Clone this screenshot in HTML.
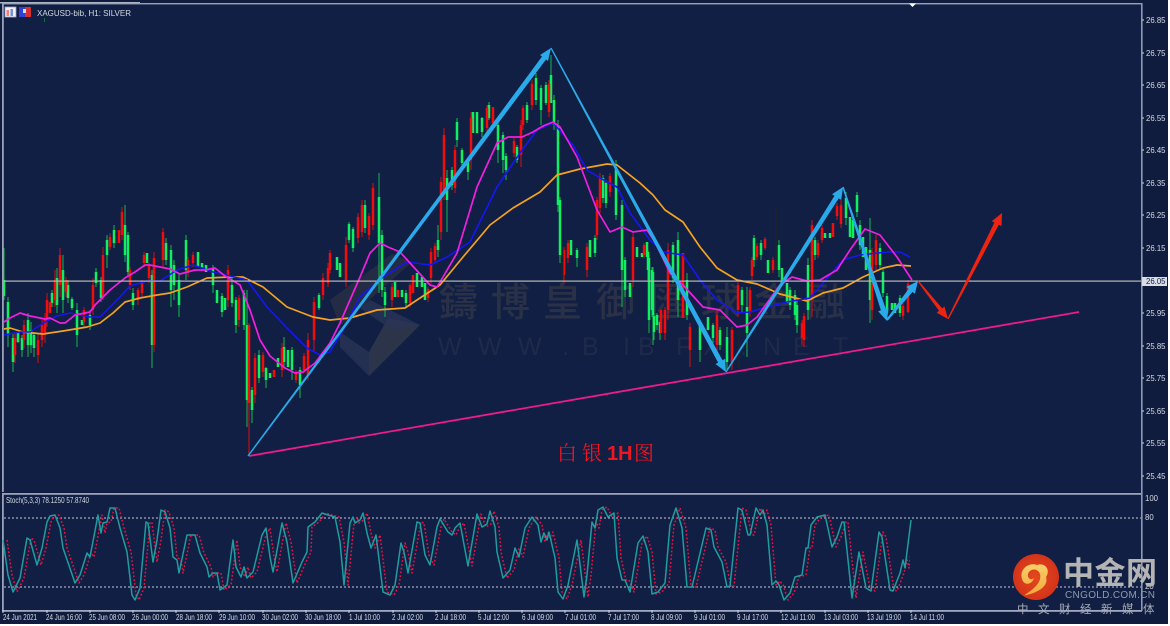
<!DOCTYPE html>
<html lang="zh">
<head>
<meta charset="utf-8">
<title>XAGUSD H1</title>
<style>
html,body{margin:0;padding:0;background:#fff;width:1170px;height:626px;overflow:hidden}
svg{display:block;font-family:"Liberation Sans","Noto Sans CJK SC",sans-serif;filter:blur(.3px)}
</style>
</head>
<body>
<svg width="1170" height="626" viewBox="0 0 1170 626" xmlns="http://www.w3.org/2000/svg">
<defs>
<clipPath id="stc"><rect x="0" y="495" width="910" height="115"/></clipPath>
<radialGradient id="lg" cx="50%" cy="50%" r="55%"><stop offset="0" stop-color="#e2481c"/><stop offset="1" stop-color="#d2321a"/></radialGradient>
<linearGradient id="sw" x1="0" y1="0" x2="0" y2="1"><stop offset="0" stop-color="#f9cf6a"/><stop offset="1" stop-color="#f2a83c"/></linearGradient>
<polyline id="stoch" fill="none" stroke-linejoin="round" points="3,540 8,575 13,592 20,578 27,538 30,540 37,565 42,548 47,522 50,516 55,515 60,528 63,548 75,583 80,575 87,553 90,557 98,515 101,533 103,523 107,522 110,508 115,508 120,528 127,552 132,595 135,600 140,588 146,522 148,523 153,562 157,540 161,510 165,512 170,528 173,557 177,560 179,573 187,535 195,535 200,553 207,567 209,577 213,573 217,573 220,590 227,585 233,540 236,567 241,577 244,567 247,578 253,572 262,535 266,528 270,557 273,572 282,523 287,542 293,583 302,562 307,552 308,527 315,522 322,513 328,515 335,517 340,542 344,585 350,523 353,517 355,523 360,520 363,513 367,533 371,548 376,535 383,592 390,595 395,585 401,543 404,552 408,573 417,522 420,523 425,555 430,565 437,527 440,519 448,532 452,535 455,528 460,523 468,566 477,514 482,527 487,524 490,511 495,527 497,552 503,578 510,570 515,548 519,557 525,528 532,517 538,525 541,542 544,533 547,540 549,532 555,558 558,592 563,599 568,585 577,540 584,597 587,575 592,522 595,528 598,510 603,507 608,517 614,513 617,558 622,580 625,580 630,592 638,543 643,536 648,552 652,594 658,592 665,583 670,525 676,508 682,528 687,587 692,587 706,528 711,530 714,547 722,562 727,587 730,586 738,508 742,510 748,535 750,535 756,508 760,515 763,510 767,525 772,585 776,581 779,585 784,600 790,593 795,577 802,575 806,548 808,548 811,525 817,517 825,515 832,547 837,537 842,522 844,522 852,598 859,552 866,588 871,591 879,532 882,537 890,590 893,591 900,573 903,560 905,568 911,520"/>
</defs>

<!-- base -->
<rect width="1170" height="626" fill="#fff"/>
<rect x="0" y="0" width="1168" height="624" fill="#0f1c3e"/>
<rect x="4" y="4" width="1137" height="488" fill="#101f43"/>
<rect x="4" y="495" width="1137" height="115" fill="#101f43"/>

<!-- watermark -->
<g fill="#333648" opacity=".55">
<polygon points="330,300 392,254 412,262 340,326"/>
<polygon points="369,376 420,325 388,318 369,352" fill="#44464f"/>
</g>
<g fill="#2a3658" opacity=".75">
<polygon points="370,300 420,325 392,330 360,308"/>
<polygon points="340,332 369,352 369,376 340,347"/>
</g>
<text y="316" font-size="39" font-weight="500" fill="#2a3147" font-family="'Noto Sans CJK TC','Liberation Sans',sans-serif" x="439 491 543 596 649 701 754 806">鑄博皇御匯球金融</text>
<text y="355" font-size="25" fill="#1f2a4a" x="438 478 518 562 582 623 638 676 703 740 763 793 833">WWW.BIBFX.NET</text>

<!-- green wicks -->
<path fill="none" stroke="#16b84e" stroke-width="1" d="M4 248V300M8 297V347M13 333V372M18 332V343M22 335V357M28 313V357M31 322V353M34 332V357M52 290V307M57 268V313M63 255V313M68 280V303M72 297V310M77 303V347M82 320V325M90 310V330M96 268V287M101 277V302M107 235V268M114 225V248M125 205V262M128 232V277M133 288V310M147 253V263M152 270V368M166 238V265M171 245V307M174 260V300M179 273V317M186 235V280M198 252V267M202 263V268M206 265V272M213 265V293M217 290V303M222 293V317M225 298V310M232 277V307M236 297V333M244 290V330M247 290V427M252 387V423M259 350V383M266 367V388M270 373V378M278 358V367M284 337V367M288 350V367M292 347V380M300 367V398M319 293V310M337 257V270M340 263V277M349 222V243M353 227V252M365 200V233M379 173V293M382 230V297M385 287V317M395 282V297M402 290V297M406 290V307M417 273V287M422 277V287M425 283V300M438 225V257M447 170V232M452 167V190M457 118V147M462 148V167M468 157V180M473 112V133M477 112V133M482 117V137M489 102V120M498 120V163M503 132V173M506 153V180M517 145V163M527 102V123M536 73V105M541 85V125M546 82V105M551 55V103M554 95V130M558 120V212M560 197V263M571 240V255M577 248V267M590 240V257M595 235V257M603 175V203M606 180V208M616 160V220M622 200V307M625 257V297M630 283V297M637 247V257M642 253V257M647 242V257M648 250V280M649 255V333M652 267V317M653 267V345M654 313V340M657 313V330M660 320V340M673 242V283M678 232V317M687 273V320M700 320V362M708 317V330M713 323V343M720 327V350M727 327V370M742 287V313M747 287V357M754 235V267M761 240V260M768 260V273M779 240V277M782 268V283M787 283V303M790 287V310M795 290V320M797 300V333M808 258V320M815 237V260M825 233V238M830 233V238M846 192V225M850 217V237M853 220V238M857 192V217M860 220V250M863 237V257M866 247V270M870 218V323M880 243V270M883 268V297M887 293V317M892 303V310M895 303V313M900 295V317"/>
<!-- green bodies -->
<path fill="none" stroke="#0ff060" stroke-width="2.5" d="M4 280V296M8 302V335M13 338V362M18 333V342M22 338V350M28 320V345M31 330V345M34 335V348M52 293V303M57 278V305M63 270V300M68 285V298M72 299V308M77 310V335M82 320V325M90 315V325M96 272V283M101 280V298M107 240V255M114 230V243M125 225V255M128 235V272M133 293V305M147 253V263M152 275V345M166 243V260M171 250V290M174 265V285M179 280V305M186 240V270M198 252V267M202 263V268M206 265V272M213 268V285M217 290V303M222 296V312M225 298V310M232 285V303M236 300V325M244 293V325M247 325V400M252 390V410M259 355V378M266 368V380M270 373V378M278 358V367M284 347V362M288 350V367M292 350V370M300 370V385M319 295V308M337 257V270M340 263V277M349 224V240M353 229V248M365 205V228M379 197V243M382 235V290M385 292V305M395 282V297M402 290V297M406 293V303M417 273V287M422 277V287M425 283V300M438 240V250M447 178V200M452 170V185M457 122V140M462 150V163M468 160V172M473 112V133M477 112V133M482 118V132M489 105V118M498 125V150M503 135V160M506 156V170M517 147V160M527 105V120M536 78V100M541 88V110M546 85V103M551 75V103M554 100V125M558 125V205M560 200V255M571 240V255M577 250V258M590 240V257M595 238V253M603 178V198M606 183V203M616 168V215M622 205V270M625 260V290M630 283V297M637 247V257M642 253V257M647 242V257M648 252V270M649 258V320M652 270V310M653 272V315M654 316V332M657 315V325M660 322V333M673 245V278M678 240V300M687 280V315M700 323V350M708 317V330M713 325V338M720 330V345M727 337V362M742 290V305M747 307V333M754 238V260M761 243V255M768 260V273M779 245V270M782 268V283M787 283V303M790 290V305M795 295V315M797 305V325M808 265V310M815 240V255M825 233V238M830 233V238M846 198V218M850 217V237M853 220V238M857 195V212M860 225V245M863 237V257M866 247V270M870 250V300M880 248V265M883 272V293M887 296V313M892 303V310M895 303V313M900 298V313"/>
<!-- red wicks -->
<path fill="none" stroke="#d31010" stroke-width="1" d="M15 333V363M24 320V348M38 333V363M42 320V347M45 313V343M47 293V327M50 302V313M55 270V307M60 248V297M66 277V297M84 307V327M93 278V315M103 247V300M110 233V250M119 230V243M122 207V240M130 267V290M138 288V305M142 280V297M144 252V267M149 263V283M154 252V352M163 228V267M188 257V277M193 252V267M228 265V307M239 295V327M249 323V456M255 353V403M263 352V377M274 370V377M282 343V377M296 370V383M304 353V373M308 333V380M314 297V352M323 273V300M328 263V287M330 250V273M346 237V287M358 213V243M362 200V237M369 213V240M373 183V230M392 283V307M398 290V297M410 283V307M413 275V293M428 287V302M431 248V283M435 243V263M441 177V240M444 128V200M455 145V193M471 112V170M487 105V133M493 107V123M514 138V157M521 120V167M523 105V130M532 80V110M549 80V117M564 247V283M568 240V263M587 243V277M597 197V240M600 173V213M610 173V197M633 233V287M644 243V258M661 310V333M665 307V340M668 243V320M683 253V318M690 323V367M717 310V357M732 327V370M738 282V317M750 287V317M752 257V280M757 243V260M765 237V250M773 257V273M802 320V345M804 313V347M812 220V317M818 240V258M822 225V243M833 223V237M837 203V220M841 200V228M872 248V320M876 235V270M903 303V320M908 280V313"/>
<!-- red bodies -->
<path fill="none" stroke="#f40c0c" stroke-width="2.5" d="M15 338V355M24 325V340M38 340V355M42 325V340M45 318V335M47 300V320M50 302V313M55 280V300M60 255V285M66 280V292M84 310V322M93 285V310M103 255V295M110 237V247M119 230V243M122 212V235M130 270V285M138 290V300M142 283V293M144 255V263M149 265V278M154 258V345M163 232V260M188 260V272M193 255V263M228 270V300M239 298V320M249 325V403M255 358V395M263 355V372M274 370V377M282 348V370M296 372V380M304 356V370M308 340V375M314 302V340M323 278V295M328 268V283M330 253V270M346 245V280M358 217V238M362 205V232M369 216V235M373 188V225M392 287V300M398 290V297M410 285V303M413 275V293M428 289V298M431 252V278M435 246V260M441 182V232M444 135V190M455 150V188M471 118V160M487 108V128M493 107V123M514 141V153M521 125V155M523 108V125M532 84V105M549 84V112M564 250V275M568 243V258M587 247V270M597 200V235M600 177V208M610 176V192M633 237V280M644 245V255M661 310V333M665 310V333M668 250V310M683 253V318M690 327V350M717 315V345M732 330V362M738 285V310M750 290V312M752 260V276M757 246V257M765 239V248M773 260V270M802 323V338M804 316V340M812 225V295M818 243V255M822 228V240M833 223V237M837 206V216M841 205V224M872 252V310M876 240V265M903 306V316M908 284V312"/>
<path fill="none" stroke="#26241f" stroke-width="1" d="M776 208V270M563 250V283M739 330V372"/>

<!-- moving averages -->
<polyline fill="none" stroke-linejoin="round" stroke="#f5a31f" stroke-width="1.7" points="4,329 10,328 23,332 43,334 63,331 87,327 100,323 113,313 125,302 140,298 157,295 170,293 187,287 207,278 230,277 243,277 263,287 287,307 313,317 330,320 350,318 377,310 405,308 420,298 440,285 463,257 490,225 513,208 540,192 557,175 580,169 607,164 617,165 640,183 653,195 665,210 683,222 700,247 717,268 737,280 757,284 780,294 807,301 823,293 843,288 863,277 883,268 897,265 911,266"/>
<polyline fill="none" stroke-linejoin="round" stroke="#1616f5" stroke-width="1.6" points="4,335 20,332 30,332 43,323 57,316 70,313 90,317 100,317 117,300 130,286 147,281 160,281 177,270 193,265 213,272 247,280 267,307 287,328 307,348 320,355 330,352 343,330 360,297 383,277 407,262 430,265 447,257 470,242 497,187 520,153 537,130 553,123 573,145 587,170 600,178 617,187 630,213 650,240 663,252 683,255 700,280 717,300 737,313 750,312 767,307 787,302 810,298 823,283 843,260 860,255 887,252 900,252 910,257"/>
<polyline fill="none" stroke-linejoin="round" stroke="#f21fe0" stroke-width="1.7" points="4,322 10,318 20,313 30,316 45,319 50,318 60,323 65,323 75,315 90,312 95,305 110,290 125,278 135,272 145,265 150,265 160,267 170,269 180,274 195,270 205,270 215,268 225,276 240,285 250,310 260,340 270,356 285,368 295,373 303,372 315,363 330,343 340,323 360,277 370,253 380,243 388,247 400,252 410,263 430,285 437,287 443,277 457,253 477,187 497,143 508,137 522,137 533,132 543,126 553,122 560,127 577,157 597,210 610,232 622,227 633,232 647,230 655,242 670,273 683,285 703,307 720,310 737,327 747,325 757,317 780,285 792,277 807,281 820,280 837,270 850,250 865,229 880,235 897,257 912,280"/>

<!-- price line -->
<rect x="4" y="280.5" width="1137" height="1.2" fill="#b9b9b4"/>

<!-- trendlines -->
<line x1="249" y1="456" x2="1079" y2="312" stroke="#ee1a8f" stroke-width="1.8"/>
<g fill="#2aaaea">
<polygon points="247.4,455.600 542,56.500 540,55 551,48 548,61 546,59.500 248.600,456.400"/>
<polygon points="551.600,47.700 722.500,360.200 725.100,358.800 726,372 715.500,364 718.100,362.600 550.400,48.300"/>
<polygon points="725.400,371.600 834.500,195.800 832,194.200 843,187 841.200,200 838.700,198.400 726.600,372.400"/>
<polygon points="843.700,186.800 885.700,308.800 888.500,307.900 887,321 878.100,311.300 880.900,310.400 842.300,187.200"/>
<polygon points="886.200,319.400 908.700,288.800 906.300,287 918,281 914.900,293.800 912.500,292 887.800,320.600"/>
</g>
<g fill="#ee2312">
<polygon points="918.500,280.600 942.200,308.400 944.500,306.500 948,319 936.700,312.700 939,310.800 917.500,281.400"/>
<polygon points="947.400,318.700 994.400,222.600 991.700,221.200 1002,213 1001.500,226.200 998.800,224.800 948.600,319.300"/>
</g>

<!-- label -->
<text y="460" font-size="20" fill="#ee1620" font-family="'Noto Serif CJK SC','Liberation Serif',serif"><tspan x="557 582">白银</tspan><tspan x="607 618" font-family="'Liberation Sans',sans-serif" font-weight="700">1H</tspan><tspan x="634">图</tspan></text>

<!-- frame -->
<rect x="0" y="2" width="140" height="1.5" fill="#aeb4c0"/>
<rect x="2" y="3" width="1140" height="1.4" fill="#9aa2ba"/>
<rect x="2" y="3" width="1.8" height="489" fill="#9aa2ba"/>
<rect x="2" y="493" width="1140" height="1.8" fill="#9aa2ba"/>
<rect x="2" y="494" width="1.8" height="117" fill="#9aa2ba"/>
<rect x="2" y="610" width="1140" height="1.8" fill="#a0a8c0"/>
<rect x="1141" y="3" width="1.6" height="608" fill="#8f97b6"/>
<polygon points="909,3.500 916,3.500 912.500,7" fill="#fff"/>

<!-- title icons -->
<rect x="5" y="7" width="11" height="10" fill="#f4f0f4" stroke="#9aa6d8" stroke-width=".8"/>
<rect x="6.500" y="10" width="2.500" height="6" fill="#f08070"/><rect x="10.500" y="9" width="2.500" height="7" fill="#7090e0"/>
<rect x="19" y="7" width="12" height="10" fill="#3040d8"/><rect x="25" y="7" width="6" height="10" fill="#d83030"/><rect x="23" y="9" width="3" height="4" fill="#cfe0f0"/>
<rect x="44" y="18" width="1" height="4" fill="#16703e"/>
<text x="37" y="16" font-size="8.500" fill="#d6dae2" textLength="94" lengthAdjust="spacingAndGlyphs">XAGUSD-bib, H1:  SILVER</text>

<!-- price axis -->
<g fill="#d6dae4" font-size="7.800">
<text x="1146" y="23">26.85</text><text x="1146" y="56">26.75</text><text x="1146" y="88">26.65</text><text x="1146" y="121">26.55</text><text x="1146" y="153">26.45</text><text x="1146" y="186">26.35</text><text x="1146" y="218">26.25</text><text x="1146" y="251">26.15</text><text x="1146" y="316">25.95</text><text x="1146" y="349">25.85</text><text x="1146" y="381">25.75</text><text x="1146" y="414">25.65</text><text x="1146" y="446">25.55</text><text x="1146" y="479">25.45</text>
</g>
<rect x="1142" y="277" width="25" height="9" fill="#d8dde6"/>
<text x="1146" y="284" font-size="7.800" fill="#101f43">26.05</text>
<path stroke="#cdd2df" stroke-width="1" d="M1142 20h2M1142 53h2M1142 85h2M1142 118h2M1142 150h2M1142 183h2M1142 215h2M1142 248h2M1142 313h2M1142 346h2M1142 378h2M1142 411h2M1142 443h2M1142 476h2"/>

<!-- stochastic -->
<text x="6" y="503" font-size="7.800" fill="#d6dae2" textLength="83" lengthAdjust="spacingAndGlyphs">Stoch(5,3,3) 78.1250 57.8740</text>
<line x1="4" y1="518" x2="1141" y2="518" stroke="#c4cad8" stroke-width="1" stroke-dasharray="2 2"/>
<line x1="4" y1="587" x2="1141" y2="587" stroke="#c4cad8" stroke-width="1" stroke-dasharray="2 2"/>
<g clip-path="url(#stc)"><use href="#stoch" transform="translate(4,0)" stroke="#f01040" stroke-width="1.500" stroke-dasharray="1.800 2"/></g>
<use href="#stoch" stroke="#1f9ca0" stroke-width="1.500"/>
<g fill="#d6dae4" font-size="7.800">
<text x="1145" y="501">100</text><text x="1145" y="520">80</text><text x="1145" y="589">20</text>
</g>

<!-- time axis -->
<path stroke="#cdd2df" stroke-width="1" d="M3 610v3M47 610v3M90 610v3M133 610v3M176 610v3M219 610v3M263 610v3M306 610v3M349 610v3M393 610v3M436 610v3M479 610v3M522 610v3M565 610v3M609 610v3M652 610v3M695 610v3M738 610v3M781 610v3M825 610v3M868 610v3M911 610v3"/>
<g fill="#d6dae4" font-size="8" lengthAdjust="spacingAndGlyphs">
<text x="3" y="620" textLength="34" lengthAdjust="spacingAndGlyphs">24 Jun 2021</text>
<text x="46" y="620" textLength="36" lengthAdjust="spacingAndGlyphs">24 Jun 16:00</text>
<text x="89" y="620" textLength="36" lengthAdjust="spacingAndGlyphs">25 Jun 08:00</text>
<text x="132" y="620" textLength="36" lengthAdjust="spacingAndGlyphs">26 Jun 00:00</text>
<text x="176" y="620" textLength="36" lengthAdjust="spacingAndGlyphs">28 Jun 18:00</text>
<text x="219" y="620" textLength="36" lengthAdjust="spacingAndGlyphs">29 Jun 10:00</text>
<text x="262" y="620" textLength="36" lengthAdjust="spacingAndGlyphs">30 Jun 02:00</text>
<text x="305" y="620" textLength="36" lengthAdjust="spacingAndGlyphs">30 Jun 18:00</text>
<text x="349" y="620" textLength="31" lengthAdjust="spacingAndGlyphs">1 Jul 10:00</text>
<text x="392" y="620" textLength="31" lengthAdjust="spacingAndGlyphs">2 Jul 02:00</text>
<text x="435" y="620" textLength="31" lengthAdjust="spacingAndGlyphs">2 Jul 18:00</text>
<text x="478" y="620" textLength="31" lengthAdjust="spacingAndGlyphs">5 Jul 12:00</text>
<text x="522" y="620" textLength="31" lengthAdjust="spacingAndGlyphs">6 Jul 09:00</text>
<text x="565" y="620" textLength="31" lengthAdjust="spacingAndGlyphs">7 Jul 01:00</text>
<text x="608" y="620" textLength="31" lengthAdjust="spacingAndGlyphs">7 Jul 17:00</text>
<text x="651" y="620" textLength="31" lengthAdjust="spacingAndGlyphs">8 Jul 09:00</text>
<text x="694" y="620" textLength="31" lengthAdjust="spacingAndGlyphs">9 Jul 01:00</text>
<text x="737" y="620" textLength="31" lengthAdjust="spacingAndGlyphs">9 Jul 17:00</text>
<text x="781" y="620" textLength="34" lengthAdjust="spacingAndGlyphs">12 Jul 11:00</text>
<text x="824" y="620" textLength="34" lengthAdjust="spacingAndGlyphs">13 Jul 03:00</text>
<text x="867" y="620" textLength="34" lengthAdjust="spacingAndGlyphs">13 Jul 19:00</text>
<text x="910" y="620" textLength="34" lengthAdjust="spacingAndGlyphs">14 Jul 11:00</text>
</g>

<!-- cngold logo -->
<circle cx="1036" cy="577" r="23" fill="url(#lg)"/>
<path fill="url(#sw)" d="M1022 579C1019 569 1029 562 1037 565C1045 562 1051 570 1046 577C1049 586 1038 593 1024 595.500C1034 589 1042 582 1040 574C1038 568 1030 568 1028 574C1027 578 1031 581 1034 578C1032 585 1024 586 1022 579Z"/>
<text x="1063" y="584" font-size="31" font-weight="700" fill="#b4b4b4" font-family="'Noto Sans CJK SC','Liberation Sans',sans-serif" textLength="94">中金网</text>
<text x="1065" y="598" font-size="10" fill="#8f9aae" textLength="90">CNGOLD.COM.CN</text>
<text y="613" font-size="11.500" fill="#a9adb8" font-family="'Noto Sans CJK SC','Liberation Sans',sans-serif" x="1017 1038 1059 1080 1101 1122 1143">中文财经新媒体</text>
</svg>
</body>
</html>
